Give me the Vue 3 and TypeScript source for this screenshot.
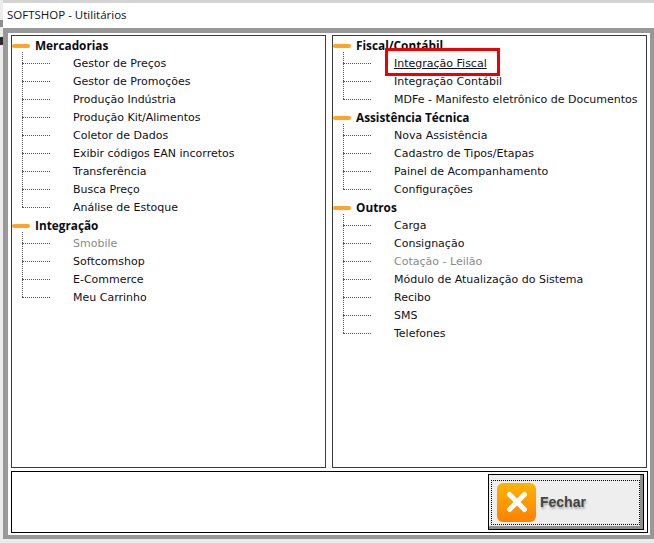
<script setup lang="ts">
interface Item { label: string; disabled?: boolean; link?: boolean }
interface Group { title: string; items: Item[] }

const toItems = (labels: string[]): Item[] => labels.map((label) => ({ label }))

const leftGroups: Group[] = [
  {
    title: 'Mercadorias',
    items: toItems([
      'Gestor de Preços',
      'Gestor de Promoções',
      'Produção Indústria',
      'Produção Kit/Alimentos',
      'Coletor de Dados',
      'Exibir códigos EAN incorretos',
      'Transferência',
      'Busca Preço',
      'Análise de Estoque',
    ]),
  },
  {
    title: 'Integração',
    items: [
      { label: 'Smobile', disabled: true },
      ...toItems(['Softcomshop', 'E-Commerce', 'Meu Carrinho']),
    ],
  },
]

const rightGroups: Group[] = [
  {
    title: 'Fiscal/Contábil',
    items: [
      { label: 'Integração Fiscal', link: true },
      ...toItems(['Integração Contábil', 'MDFe - Manifesto eletrônico de Documentos']),
    ],
  },
  {
    title: 'Assistência Técnica',
    items: toItems(['Nova Assistência', 'Cadastro de Tipos/Etapas', 'Painel de Acompanhamento', 'Configurações']),
  },
  {
    title: 'Outros',
    items: [
      ...toItems(['Carga', 'Consignação']),
      { label: 'Cotação - Leilão', disabled: true },
      ...toItems(['Módulo de Atualização do Sistema', 'Recibo', 'SMS', 'Telefones']),
    ],
  },
]

const panels = [leftGroups, rightGroups]
</script>

<template>
  <div class="page">
    <div class="edge">
      <span class="edge-gray"></span>
      <span class="edge-dark"></span>
    </div>
    <div class="window">
      <div class="titlebar">SOFTSHOP - Utilitários</div>
      <div class="frame">
        <div class="panels">
          <div v-for="(groups, p) in panels" :key="p" class="panel">
            <div v-if="p === 1" class="highlight"></div>
            <div v-for="group in groups" :key="group.title" class="group">
              <div class="head">
                <span class="dash"></span>
                <span class="head-text">{{ group.title }}</span>
              </div>
              <div
                v-for="item in group.items"
                :key="item.label"
                class="row"
                :class="{ disabled: item.disabled, link: item.link }"
              >
                <span class="conn"></span>
                <span class="label">{{ item.label }}</span>
              </div>
            </div>
          </div>
        </div>
        <div class="footer">
          <button class="close" type="button">
            <span class="close-inner">
              <span class="close-icon">
                <svg width="22" height="22" viewBox="0 0 22 22">
                  <path d="M3.5 3.5 L18.5 18.5 M18.5 3.5 L3.5 18.5" stroke="#fff" stroke-width="5" stroke-linecap="round" fill="none" />
                </svg>
              </span>
              <span class="close-text">Fechar</span>
            </span>
          </button>
        </div>
      </div>
    </div>
  </div>
</template>

<style scoped>
.page {
  width: 654px;
  height: 543px;
  display: flex;
  background: #ececec;
  overflow: hidden;
  font-family: "DejaVu Sans", sans-serif;
}
.edge {
  width: 3px;
  flex: none;
  padding-top: 20px;
  display: flex;
  flex-direction: column;
}
.edge-gray {
  height: 7px;
  background: #8f8f8f;
  margin-bottom: 10px;
}
.edge-dark {
  height: 8px;
  background: #2a2a2a;
}
.window {
  flex: none;
  width: 651px;
  height: 539px;
  display: flex;
  flex-direction: column;
  border-top: 3px solid #d4d4d4;
  box-sizing: border-box;
  background: #fff;
}
.titlebar {
  height: 25px;
  padding-left: 4px;
  font: 11.5px/24px "Open Sans", sans-serif;
  color: #111;
  flex: none;
}
.frame {
  flex: 1;
  border: 5px solid #989898;
  border-right-width: 4px;
  border-bottom-width: 4px;
  background: #fff;
  padding: 1px 2px 2px 3px;
  display: flex;
  flex-direction: column;
  gap: 3px;
  min-height: 0;
}
.panels {
  height: 433px;
  margin-top: 1px;
  display: flex;
  gap: 6px;
  flex: none;
}
.panel {
  position: relative;
  width: 315px;
  box-sizing: border-box;
  border: 1.5px solid #3c3c3c;
  padding-top: 1px;
  background: #fff;
}
.head {
  height: 18px;
  display: flex;
  align-items: center;
}
.dash {
  width: 18px;
  height: 4px;
  background: #ffa426;
  border-radius: 2px;
  flex: none;
}
.head-text {
  margin-left: 5px;
  margin-top: -2px;
  font: 700 11.8px/18px "Open Sans", sans-serif;
  color: #0a0a14;
  white-space: nowrap;
}
.row {
  position: relative;
  height: 18px;
  display: flex;
  align-items: center;
  font-size: 11px;
  color: #101018;
  white-space: nowrap;
}
.conn {
  position: relative;
  flex: none;
  margin-left: 10px;
  width: 28px;
  height: 18px;
}
.conn::before {
  content: "";
  position: absolute;
  left: 0;
  top: -3px;
  height: 11px;
  border-left: 1px dotted #555;
}
.row:not(:last-child) .conn::before {
  height: 21px;
}
.conn::after {
  content: "";
  position: absolute;
  left: 0;
  top: 8px;
  width: 28px;
  border-top: 1px dotted #555;
}
.label {
  margin-left: 23px;
  margin-top: -2px;
}
.disabled {
  color: #8a8a8a;
}
.link .label {
  text-decoration: underline;
}
.highlight {
  position: absolute;
  left: 52px;
  top: 12px;
  width: 109px;
  height: 22px;
  border: 3px solid #ee0000;
  z-index: 1;
  pointer-events: none;
}
.footer {
  flex: 1;
  min-height: 0;
  border: 1.5px solid #000;
  background: #fff;
  display: flex;
  justify-content: flex-end;
  align-items: center;
  padding-right: 3px;
}
.close {
  width: 156px;
  height: 56px;
  padding: 0 1px 0 0;
  border: 1.5px solid #000;
  box-shadow: inset -3px -3px 0 #8f8f8f;
  background: #eeeeee;
  box-sizing: border-box;
  display: flex;
  align-items: center;
  justify-content: center;
}
.close-inner {
  width: 149px;
  height: 45px;
  box-sizing: border-box;
  border: 1px dotted #000;
  display: flex;
  align-items: center;
  padding-left: 5px;
  gap: 4px;
}
.close-icon {
  width: 39px;
  height: 39px;
  border-radius: 6px;
  background: linear-gradient(#ffb400, #ff8000);
  display: flex;
  align-items: center;
  justify-content: center;
  flex: none;
}
.close-text {
  font: 700 14px "Liberation Sans", sans-serif;
  color: #444;
  text-shadow: 1px 2px 2px #aaa;
}
</style>
